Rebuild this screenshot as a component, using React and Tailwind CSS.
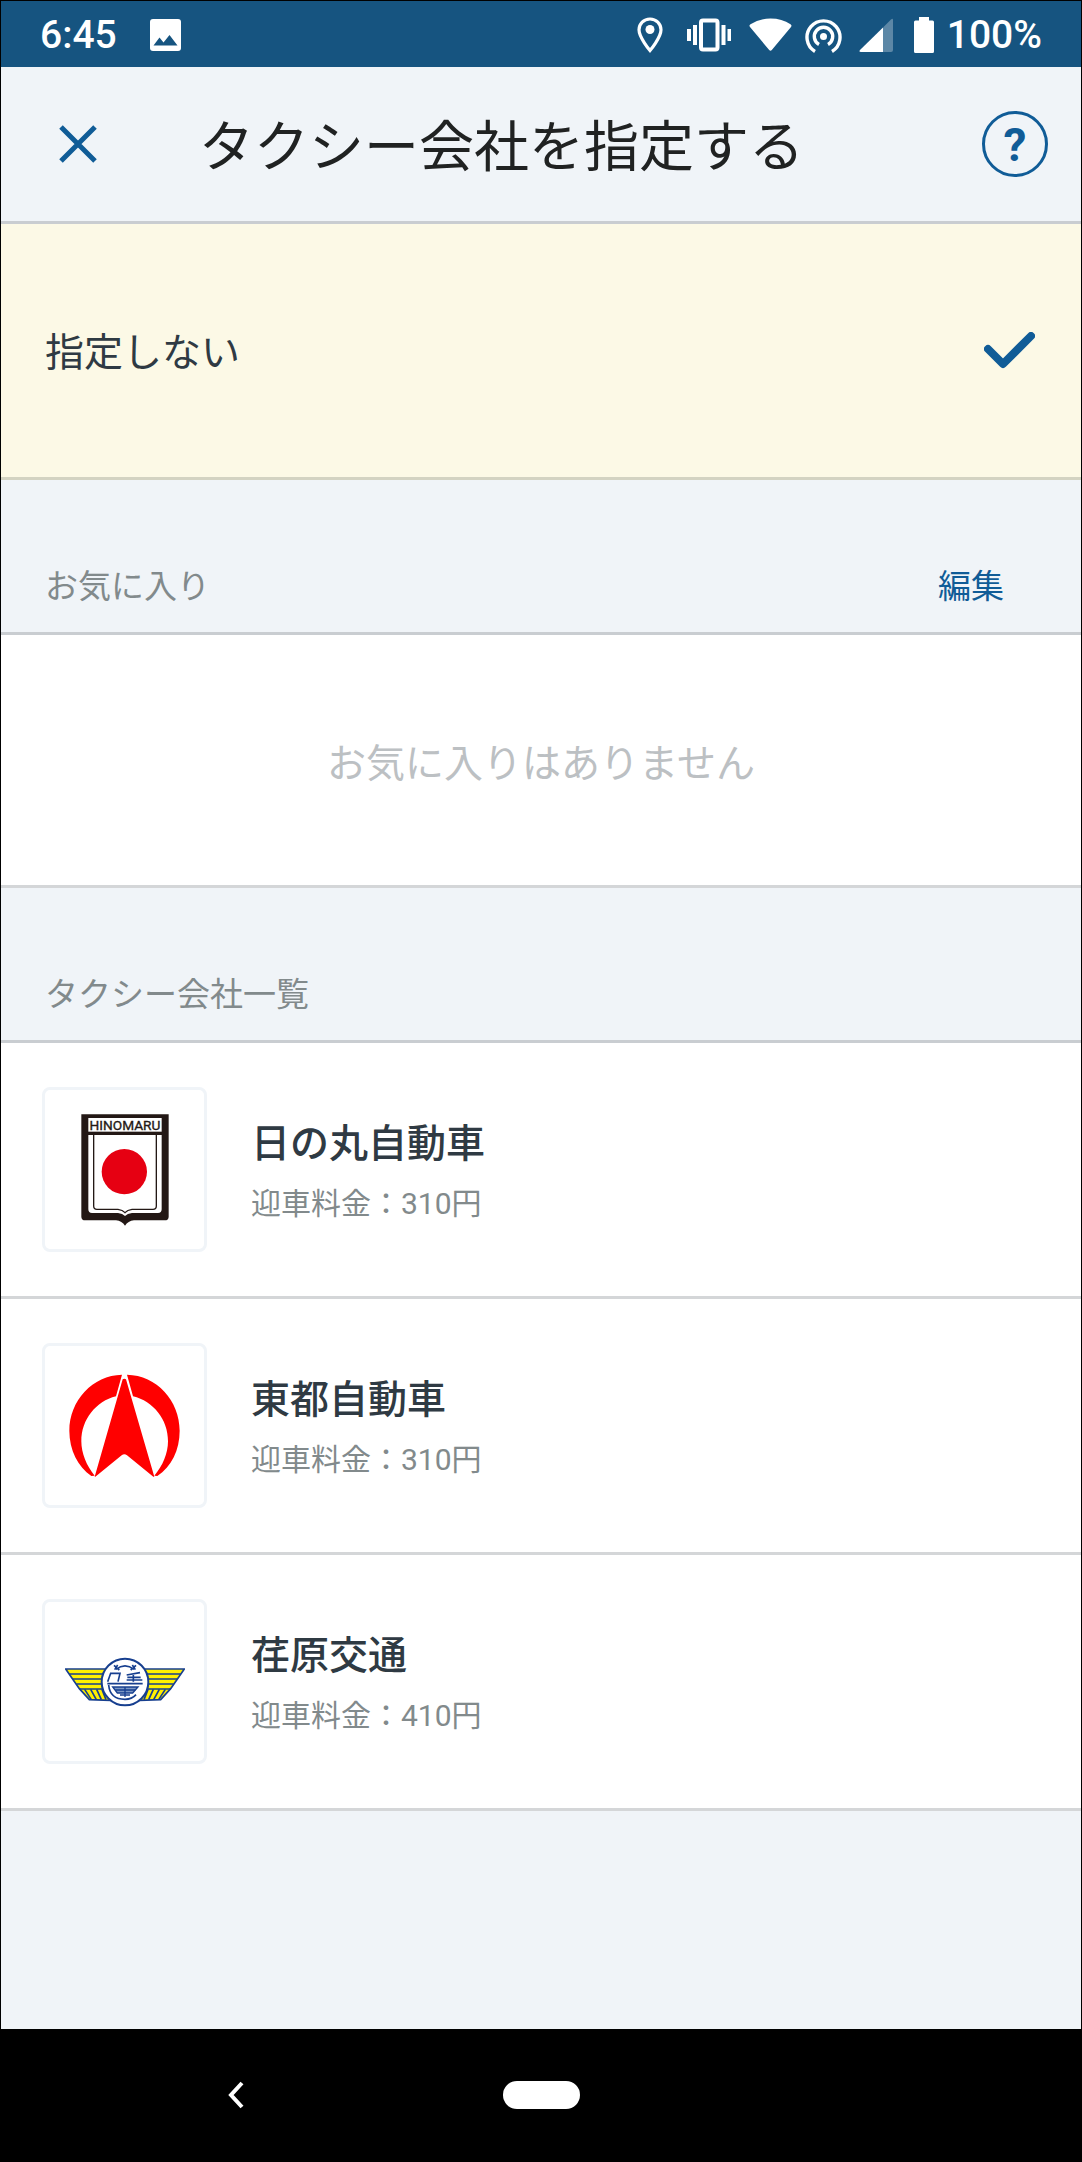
import React, { useState } from 'react'
import clsx from 'clsx'

function ImageIcon() {
  return (
    <svg className="h-8 w-8" viewBox="0 0 32 32" aria-hidden="true">
      <rect width="31" height="32" rx="3" fill="#fff" />
      <path d="M3.500 26.500L9.500 18.500L13.500 23.500L19.500 16L27.500 26.500Z" fill="#165480" />
    </svg>
  )
}

function StatusIcons() {
  return (
    <div className="flex items-center">
      <svg className="h-9 w-[26px]" viewBox="0 0 26 36" aria-hidden="true">
        <path
          d="M13 2C6.800 2 2 6.600 2 12.800C2 20.500 13 33.500 13 33.500S24 20.500 24 12.800C24 6.600 19.200 2 13 2Z"
          fill="none"
          stroke="#fff"
          strokeWidth="3.200"
        />
        <circle cx="13" cy="12.500" r="4.500" fill="#fff" />
      </svg>
      <svg className="ml-6 h-9 w-11" viewBox="0 0 44 36" fill="#fff" aria-hidden="true">
        <rect x="14" y="3.500" width="16.500" height="29" rx="2" fill="none" stroke="#fff" strokeWidth="4" />
        <rect x="0" y="12" width="4" height="12" />
        <rect x="6" y="8" width="4" height="20" />
        <rect x="34.500" y="8" width="4" height="20" />
        <rect x="40.500" y="12" width="4" height="12" />
      </svg>
      <svg className="ml-[18px] h-9 w-[43px]" viewBox="0 0 43 36" fill="#fff" aria-hidden="true">
        <path d="M1 10Q-0.300 8.500 1.500 7.300Q10 1.500 21.500 1.500T41.500 7.300Q43.200 8.500 42 10L22.800 33Q21.500 34.600 20.200 33Z" />
      </svg>
      <svg
        className="ml-[13px] h-9 w-[37px]"
        viewBox="0 0 37 36"
        fill="none"
        stroke="#fff"
        strokeWidth="3.400"
        aria-hidden="true"
      >
        <path d="M10 34.500A16.500 16.500 0 1 1 27 34.500" />
        <path d="M14 27.500A9.200 9.200 0 1 1 23 27.500" />
        <circle cx="18.500" cy="19.500" r="3.500" fill="#fff" stroke="none" />
      </svg>
      <svg className="ml-[17px] h-9 w-[34px]" viewBox="0 0 34 36" fill="#fff" aria-hidden="true">
        <path d="M24 10.500L32 2.500Q34 1 34 3V33Q34 35 32 35H24Z" opacity="0.300" />
        <path d="M24 10.500V35H2Q-0.500 35 1 33Z" />
      </svg>
      <svg className="ml-[21px] h-[38px] w-5" viewBox="0 0 20 38" fill="#fff" aria-hidden="true">
        <path d="M5 1H15V4.500H18.500Q20 4.500 20 6V35.500Q20 37 18.500 37H1.500Q0 37 0 35.500V6Q0 4.500 1.500 4.500H5Z" />
      </svg>
      <span className="ml-[13px]">100%</span>
    </div>
  )
}

function HinomaruLogo() {
  return (
    <svg className="h-28 w-22" viewBox="63 42 264 336" aria-hidden="true">
      <path d="M64 43H326V350Q326 361 314 361H222Q204 363 195 377Q186 363 168 361H76Q64 361 64 350Z" fill="#231815" />
      <rect x="85" y="54" width="220" height="41" fill="#fff" />
      <path d="M85 105H305V328Q305 339 294 339H216Q202 340 195 348Q188 340 174 339H96Q85 339 85 328Z" fill="#fff" />
      <path
        d="M101 104V318Q101 328 111 328H174Q188 330 195 338Q202 330 216 328H279Q289 328 289 318V104"
        fill="none"
        stroke="#231815"
        strokeWidth="4"
      />
      <circle cx="193" cy="215" r="68" fill="#e60012" />
      <text
        x="195"
        y="90"
        textAnchor="middle"
        fontFamily="Roboto, sans-serif"
        fontSize="41"
        fill="#231815"
        stroke="#231815"
        strokeWidth="1"
      >
        HINOMARU
      </text>
    </svg>
  )
}

function TotoLogo() {
  return (
    <svg className="h-[103px] w-[111px]" viewBox="27 42 333 309" fill="#ff0000" aria-hidden="true">
      <path d="M186 44C98 46 28 122 28 212C28 270 54 320 94 348L104 347C80 318 64 280 64 244C64 178 108 124 168 109Z" />
      <path d="M201 44C290 46 359 122 359 212C359 270 334 320 292 348L283 347C308 318 324 280 324 244C324 178 280 124 219 109Z" />
      <path d="M188 58Q193 54 198 58L283 350H280L201 286Q193 279 185 286L106 350H104Z" />
    </svg>
  )
}

function EbaraLogo() {
  return (
    <svg className="h-[50px] w-[120px]" viewBox="45 80 360 150" fill="none" stroke="#173f8f" aria-hidden="true">
      <path d="M47 116H180V210L118 208L88 175Z" fill="#fff000" strokeWidth="5" />
      <path d="M403 116H270V210L332 208L362 175Z" fill="#fff000" strokeWidth="5" />
      <path d="M58 131H165M69 146H165M79 161H165M89 176H165" strokeWidth="5" />
      <path d="M392 131H285M381 146H285M371 161H285M361 176H285" strokeWidth="5" />
      <path d="M104 177L124 208M122 177L139 208M140 177L154 208M156 177L168 208" strokeWidth="5" />
      <path d="M346 177L326 208M328 177L311 208M310 177L296 208M294 177L282 208" strokeWidth="5" />
      <circle cx="225" cy="155" r="70" fill="#fff" strokeWidth="6" />
      <path d="M198 117Q225 96 252 117M192 105L208 119M258 105L242 119M203 104L194 118M247 104L256 118" strokeWidth="5" />
      <path d="M173 154L182 129H210L204 154M230 134L270 127M250 130V154M232 141H272M230 149H277" strokeWidth="5" />
      <path d="M172 160H278" strokeWidth="5" />
      <path d="M188 170H264L248 188H202Z" fill="#7d98c4" strokeWidth="4" />
      <path d="M196 179H256M210 194H240M225 170V200" strokeWidth="4" />
      <path d="M176 164Q180 207 225 207Q246 207 258 193" strokeWidth="5" />
    </svg>
  )
}

const companies = [
  { name: '日の丸自動車', fee: 310, Logo: HinomaruLogo },
  { name: '東都自動車', fee: 310, Logo: TotoLogo },
  { name: '荏原交通', fee: 410, Logo: EbaraLogo },
]

function SectionHeader({ title, children }) {
  return (
    <div className="flex h-[155px] items-end justify-between border-b-[3px] border-[#c9cdd1] pr-[77px] pb-[21px] pl-11 text-[33px] leading-[48px] text-[#828a8c]">
      <h2>{title}</h2>
      {children}
    </div>
  )
}

export default function App() {
  const [selected, setSelected] = useState(null)

  return (
    <div className="flex min-h-screen flex-col border border-black bg-[#f0f4f8] font-[Roboto,'Noto_Sans_CJK_JP',sans-serif] text-[#2f3a43]">
      {/* Status bar */}
      <div className="flex h-[66px] items-center justify-between bg-[#165480] px-[39px] pt-0.5 text-[39px] font-medium text-white">
        <div className="flex items-center gap-[33px]">
          <span>6:45</span>
          <ImageIcon />
        </div>
        <StatusIcons />
      </div>

      {/* Title bar */}
      <header className="flex h-[157px] items-center border-b-[3px] border-[#c9cdd1] pr-[33px] pl-[58px]">
        <button type="button" aria-label="閉じる" className="text-[#105c97]">
          <svg className="h-[38px] w-[38px]" viewBox="0 0 38 38" stroke="currentColor" strokeWidth="5" aria-hidden="true">
            <path d="M2 2L36 36M36 2L2 36" />
          </svg>
        </button>
        <h1 className="ml-[102px] flex-1 pt-1.5 text-[55px] leading-[80px] text-[#202222]">タクシー会社を指定する</h1>
        <button
          type="button"
          aria-label="ヘルプ"
          className="flex h-[66px] w-[66px] items-center justify-center rounded-full border-[3px] border-[#105c97] pt-0.5 text-[46px] font-bold text-[#105c97]"
        >
          ?
        </button>
      </header>

      <main className="flex-1">
        <button
          type="button"
          onClick={() => setSelected(null)}
          className={clsx(
            'flex h-[256px] w-full items-center justify-between border-b-[3px] pr-[46px] pl-11 text-left text-[39px]',
            selected === null ? 'border-[#d3d3c2] bg-[#fcf9e6]' : 'border-[#d4d6d8] bg-white'
          )}
        >
          <span className="pt-1.5">指定しない</span>
          {selected === null && (
            <svg className="h-[37px] w-[51px]" viewBox="0 0 51 37" fill="none" stroke="#105c97" strokeWidth="8" strokeLinecap="round" strokeLinejoin="round" aria-hidden="true">
              <path d="M4 17L19 32L47 4" />
            </svg>
          )}
        </button>

        {/* Favorites */}
        <SectionHeader title="お気に入り">
          <button type="button" className="text-[#105c97]">
            編集
          </button>
        </SectionHeader>
        <p className="flex h-[253px] items-center justify-center border-b-[3px] border-[#d4d6d8] bg-white pt-2 text-[39px] text-[#bcc0c3]">
          お気に入りはありません
        </p>

        {/* Company list */}
        <SectionHeader title="タクシー会社一覧" />
        <ul>
          {companies.map(({ name, fee, Logo }) => (
            <li key={name}>
              <button
                type="button"
                onClick={() => setSelected(name)}
                className={clsx(
                  'flex h-[256px] w-full items-center border-b-[3px] border-[#d4d6d8] pl-[41px] text-left',
                  selected === name ? 'bg-[#fcf9e6]' : 'bg-white'
                )}
              >
                <span className="flex h-[165px] w-[165px] items-center justify-center rounded-lg border-[3px] border-[#f0f4f8] bg-white">
                  <Logo />
                </span>
                <span className="ml-11 flex flex-col gap-0.5 pt-2">
                  <span className="text-[39px] leading-[58px] font-medium">{name}</span>
                  <span className="text-[30px] leading-[58px] text-[#828a8c]">迎車料金：{fee}円</span>
                </span>
              </button>
            </li>
          ))}
        </ul>
      </main>

      {/* System navigation */}
      <nav className="grid h-[132px] grid-cols-[1fr_auto_1fr] items-center bg-black">
        <button type="button" aria-label="戻る" className="mr-8 justify-self-center">
          <svg className="h-7 w-4" viewBox="0 0 16 28" fill="none" stroke="#fff" strokeWidth="4" aria-hidden="true">
            <path d="M14 2L3 14L14 26" />
          </svg>
        </button>
        <button type="button" aria-label="ホーム" className="h-7 w-[77px] rounded-full bg-white" />
      </nav>
    </div>
  )
}
